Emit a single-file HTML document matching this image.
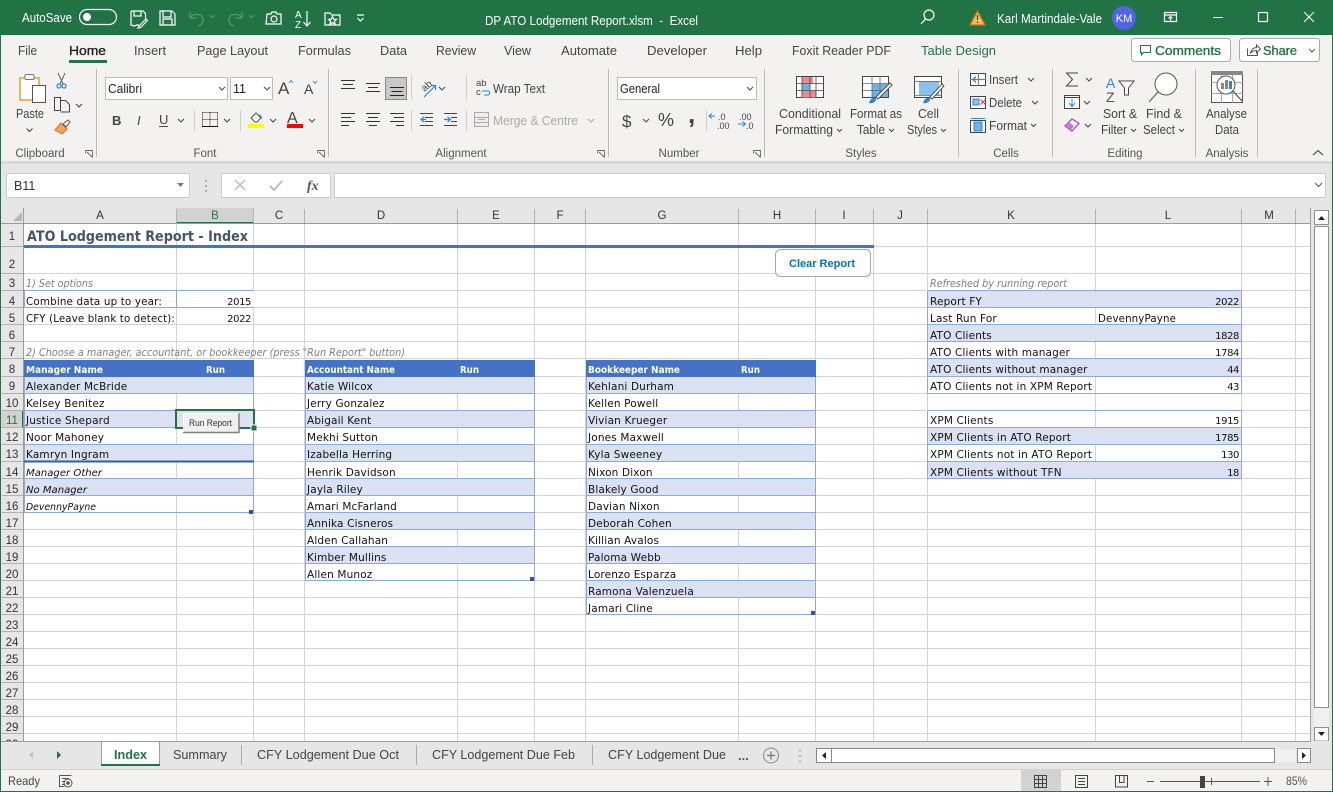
<!DOCTYPE html>
<html><head><meta charset="utf-8"><title>DP ATO Lodgement Report.xlsm - Excel</title>
<style>
html,body{margin:0;padding:0;background:#e6e6e6;width:1333px;height:792px;overflow:hidden}
svg{display:block}
text{font-family:"Liberation Sans",sans-serif;white-space:pre}
.t{font-size:13px;fill:#fff}
.tab{font-size:13px;fill:#444}
.rb{font-size:12.5px;fill:#444}
.g{font-size:11.5px;fill:#555;text-anchor:middle}
.c{font-family:"DejaVu Sans",sans-serif;font-size:10.5px;letter-spacing:.15px;fill:#111}
.ci{font-family:"DejaVu Sans",sans-serif;font-size:10px;fill:#111;font-style:italic}
.n{font-family:"DejaVu Sans",sans-serif;font-size:10px;letter-spacing:-.4px;fill:#111;text-anchor:end}
.h{font-family:"DejaVu Sans",sans-serif;font-size:10px;fill:#fff;font-weight:bold}
.note{font-family:"DejaVu Sans",sans-serif;font-size:10.5px;fill:#7f7f7f;font-style:italic}
.rn{font-size:11.5px;fill:#333;text-anchor:middle}
.ch{font-size:11.5px;fill:#333;text-anchor:middle}
.st{font-size:12.5px;fill:#444}
.i{fill:none;stroke:#444;stroke-width:1}
.w{fill:none;stroke:#fff;stroke-width:1.2}
</style></head><body>
<svg width="1333" height="792" viewBox="0 0 1333 792" xmlns="http://www.w3.org/2000/svg">
<rect width="1333" height="792" fill="#e6e6e6"/>
<!-- title bar -->
<rect width="1333" height="35" fill="#217346"/>
<text class="t" x="22" y="22" textLength="50" lengthAdjust="spacingAndGlyphs">AutoSave</text>
<rect x="79.500" y="9.500" width="37" height="15" rx="7.500" class="w"/><circle cx="87" cy="17" r="4" fill="#fff"/>
<path class="w" d="M131 11h12l2.500 2.500v5M131 11v14l3 1 3-1 2 0M134 11v5h7v-5"/><path d="M139 26l7-7 1.500 1.500-7 7-2.500.5z" class="w"/>
<path class="w" d="M160 11h12l3 3v11h-15zM163 11v6h8v-6M163 25v-6h9v6"/>
<path d="M190 12v6h6M190 18c3-5 12-5 13 1 .5 4-2 6-5 7" fill="none" stroke="#5c9378" stroke-width="1.300"/>
<path d="M210 15l2.500 2.500 2.500-2.500" fill="none" stroke="#5c9378"/>
<path d="M242 12v6h-6M242 18c-3-5-12-5-13 1-.5 4 2 6 5 7" fill="none" stroke="#5c9378" stroke-width="1.300"/>
<path d="M249 15l2.500 2.500 2.500-2.500" fill="none" stroke="#5c9378"/>
<path class="w" d="M267 14h4l1-2h4l1 2h4v10h-15z"/><circle cx="274" cy="19" r="3" class="w"/>
<text x="295" y="18" style="font-size:10px;fill:#fff">A</text><text x="295" y="28" style="font-size:10px;fill:#fff">Z</text>
<path class="w" d="M307 11v15M303.500 22l3.500 4 3.500-4"/>
<path class="w" d="M325 13h5l2 2h8v10h-15z"/><path d="M332.500 16.500l1.200 2.700 2.800.2-2.100 1.900.7 2.800-2.600-1.500-2.600 1.500.7-2.800-2.100-1.900 2.800-.2z" class="w" stroke-width="1"/>
<path class="w" d="M357 15h7M357.500 18l3 3 3-3"/>
<text class="t" x="485" y="25" textLength="213" lengthAdjust="spacingAndGlyphs">DP ATO Lodgement Report.xlsm  -  Excel</text>
<circle cx="929" cy="15" r="5" class="w"/><path class="w" d="M925.500 19l-4.500 5"/>
<path d="M977.500 11l7.500 14h-15z" fill="#f2c14e" stroke="#d9691e" stroke-width="1.300"/><path d="M977.500 15v5M977.500 21.500v1.500" stroke="#444" stroke-width="1.200"/>
<text class="t" x="997" y="23" textLength="105" lengthAdjust="spacingAndGlyphs">Karl Martindale-Vale</text>
<circle cx="1124" cy="18" r="12" fill="#4f65e6"/><text x="1124" y="22" style="font-size:11px;fill:#fff;text-anchor:middle">KM</text>
<path class="w" d="M1164.500 12.500h12v9h-12zM1164.500 15h12M1170.500 21v-4M1168.500 18.500l2-2 2 2"/>
<path d="M1213 17.500h10" stroke="#fff" stroke-width="1"/>
<rect x="1258.500" y="12.500" width="9" height="9" class="w" stroke-width="1"/>
<path d="M1304 12l10 10M1314 12l-10 10" stroke="#fff" stroke-width="1.100"/>
<!-- ribbon -->
<rect x="1" y="35" width="1331" height="126" fill="#f3f2f1"/>
<rect x="1" y="161" width="1331" height="3" fill="#d8d8d8"/>
<text class="tab" x="18" y="55" textLength="19" lengthAdjust="spacingAndGlyphs">File</text>
<text class="tab" x="69" y="55" textLength="37" lengthAdjust="spacingAndGlyphs" style="fill:#222;stroke:#222;stroke-width:.35">Home</text>
<rect x="69" y="60" width="38" height="3" fill="#217346"/>
<text class="tab" x="134" y="55" textLength="32" lengthAdjust="spacingAndGlyphs">Insert</text>
<text class="tab" x="197" y="55" textLength="71" lengthAdjust="spacingAndGlyphs">Page Layout</text>
<text class="tab" x="298" y="55" textLength="53" lengthAdjust="spacingAndGlyphs">Formulas</text>
<text class="tab" x="380" y="55" textLength="27" lengthAdjust="spacingAndGlyphs">Data</text>
<text class="tab" x="436" y="55" textLength="40" lengthAdjust="spacingAndGlyphs">Review</text>
<text class="tab" x="504" y="55" textLength="27" lengthAdjust="spacingAndGlyphs">View</text>
<text class="tab" x="561" y="55" textLength="56" lengthAdjust="spacingAndGlyphs">Automate</text>
<text class="tab" x="647" y="55" textLength="60" lengthAdjust="spacingAndGlyphs">Developer</text>
<text class="tab" x="735" y="55" textLength="27" lengthAdjust="spacingAndGlyphs">Help</text>
<text class="tab" x="792" y="55" textLength="99" lengthAdjust="spacingAndGlyphs">Foxit Reader PDF</text>
<text class="tab" x="921" y="55" textLength="75" lengthAdjust="spacingAndGlyphs" style="fill:#217346">Table Design</text>
<rect x="1131.500" y="38.500" width="99" height="23" rx="3" fill="#fff" stroke="#aaa"/>
<path d="M1140.500 45.500h10v7h-7l-2 2.500v-2.500h-1z" fill="none" stroke="#217346"/>
<text x="1155" y="55" textLength="66" lengthAdjust="spacingAndGlyphs" style="font-size:13px;fill:#217346;stroke:#217346;stroke-width:.35">Comments</text>
<rect x="1239.500" y="38.500" width="80" height="23" rx="3" fill="#fff" stroke="#aaa"/>
<path d="M1247.500 48.500v7h10v-3M1250.500 53c1-4 3-5.500 6-5.500v-2.500l4 4-4 4v-2.500c-2 0-4 .5-6 2.500z" fill="none" stroke="#555"/>
<text x="1263" y="55" textLength="34" lengthAdjust="spacingAndGlyphs" style="font-size:13px;fill:#217346;stroke:#217346;stroke-width:.35">Share</text>
<path d="M1309 49l3 3 3-3" fill="none" stroke="#217346"/>
<!-- group separators -->
<path d="M96.500 69v88M328.500 69v88M608.500 69v88M764.500 69v88M958.500 69v88M1052.500 69v88M1195.500 69v88M1257.500 69v88" stroke="#bbb"/>
<text class="g" x="40" y="157">Clipboard</text><text class="g" x="205" y="157">Font</text><text class="g" x="461" y="157">Alignment</text><text class="g" x="679" y="157">Number</text><text class="g" x="861" y="157">Styles</text><text class="g" x="1006" y="157">Cells</text><text class="g" x="1125" y="157">Editing</text><text class="g" x="1227" y="157">Analysis</text>
<path d="M85.500 150.500h7v7M85.500 150.500v3M87 152l5 5M317.500 150.500h7v7M317.500 150.500v3M319 152l5 5M597.500 150.500h7v7M597.500 150.500v3M599 152l5 5M753.500 150.500h7v7M753.500 150.500v3M755 152l5 5" fill="none" stroke="#666" stroke-width=".9"/>
<path d="M1313 155l5-4.500 5 4.500" fill="none" stroke="#555" stroke-width="1.200"/>
<!-- clipboard -->
<path d="M20 78h19v22H20z" fill="#fff" stroke="#e59c3c" stroke-width="1.500"/><rect x="25" y="74.500" width="9" height="5" rx="1" fill="#fff" stroke="#777"/>
<rect x="32.500" y="85.500" width="13" height="17" fill="#fff" stroke="#555"/>
<text class="rb" x="16" y="118" textLength="28" lengthAdjust="spacingAndGlyphs">Paste</text>
<path d="M26.500 128.500l3 3 3-3" fill="none" stroke="#444"/>
<path d="M58 73l5 11M65 73l-5 11" stroke="#666"/><circle cx="59" cy="86" r="2" fill="none" stroke="#2b88d8" stroke-width="1.200"/><circle cx="64" cy="86" r="2" fill="none" stroke="#2b88d8" stroke-width="1.200"/>
<path class="i" d="M54.500 97.500h6v13h-6zM60.500 100.500h5l4 4v7.500h-9"/><path class="i" d="M76 104l3 3 3-3"/>
<path d="M55 130l6-7 6 6-5 5z" fill="#f0a65f" stroke="#d9691e"/><path d="M63 124l5-4 2 2-4 5z" fill="none" stroke="#555"/>
<!-- font -->
<rect x="105.500" y="77.500" width="122" height="22" fill="#fff" stroke="#bbb"/>
<text class="rb" x="108" y="93" textLength="34" lengthAdjust="spacingAndGlyphs" style="fill:#222">Calibri</text><path class="i" d="M219 87l3 3 3-3"/>
<rect x="230.500" y="77.500" width="42" height="22" fill="#fff" stroke="#bbb"/>
<text class="rb" x="233" y="93" style="fill:#222">11</text><path class="i" d="M264 87l3 3 3-3"/>
<text x="278" y="94" style="font-size:17px;fill:#444">A</text><path d="M289 83l2-2.500 2 2.500" fill="none" stroke="#2b88d8"/>
<text x="304" y="94" style="font-size:14px;fill:#444">A</text><path d="M313 81l2 2.500 2-2.500" fill="none" stroke="#2b88d8"/>
<text x="112" y="125" style="font-size:13px;font-weight:bold;fill:#444">B</text>
<text x="137" y="125" style="font-size:13px;font-style:italic;fill:#444">I</text>
<text x="159" y="124" style="font-size:13px;fill:#444">U</text><path d="M159 126.500h9" stroke="#444"/><path class="i" d="M178 119l3 3 3-3"/>
<path d="M202.500 112.500h15M202.500 112.500v13.500M217.500 112.500v13.500M210 112.500v13.500M202.500 119.500h15" fill="none" stroke="#222" stroke-dasharray="1 1"/><path d="M202 126.500h16" stroke="#111"/><path class="i" d="M224 119l3 3 3-3"/>
<path d="M251 118l5-5 5 5-4 4h-2z" fill="none" stroke="#555"/><path d="M259 115l2 1 .5 3" stroke="#2b88d8" fill="none"/><rect x="248" y="124" width="16" height="4" fill="#ff0"/><path class="i" d="M270 119l3 3 3-3"/>
<text x="287" y="123" style="font-size:16px;fill:#444">A</text><rect x="287" y="124" width="16" height="4" fill="#f00"/><path class="i" d="M309 119l3 3 3-3"/>
<path d="M194.500 110v21M240.500 110v21" stroke="#ccc"/>
<!-- alignment -->
<path d="M341 80.500h14M343 84.500h10M341 88.500h14M366 83.500h14M368 87.500h10M366 91.500h14" stroke="#333"/>
<rect x="385.500" y="77.500" width="21" height="22" fill="#c8c8c8" stroke="#888"/><path d="M390 87.500h14M391.500 91.500h11M390 95.500h14" stroke="#222"/>
<path d="M341 113.500h14M341 117.500h10M341 121.500h14M341 125.500h8M366 113.500h14M368 117.500h10M366 121.500h14M369 125.500h8M390 113.500h14M394 117.500h10M390 121.500h14M396 125.500h8" stroke="#333"/>
<path d="M411.500 75v25M411.500 110v21" stroke="#ccc"/>
<text x="420" y="90" transform="rotate(-42 425 85)" style="font-size:10px;fill:#444">ab</text><path d="M424 97l11-11M431 85.500h4.500v4.500" stroke="#2b88d8" fill="none" stroke-width="1.200"/><path class="i" d="M439 87l3 3 3-3"/>
<path d="M425 117.500h8M425 121.500h8M420 113.500h13M420 125.500h13" fill="none" stroke="#444"/><path d="M424 117l-3 2.500 3 2.500M421 119.500h5" fill="none" stroke="#2b88d8" stroke-width="1.200"/>
<path d="M444 113.500h13M451 117.500h6M451 121.500h6M444 125.500h13" stroke="#444"/><path d="M444 119.500h6M447.500 117l3 2.500-3 2.500" fill="none" stroke="#2b88d8" stroke-width="1.200"/>
<path d="M466.500 75v25M466.500 110v21" stroke="#ccc"/>
<text x="476" y="86" style="font-size:9.500px;fill:#444">ab</text><text x="476" y="95" style="font-size:9.500px;fill:#444">c</text><path d="M482 91h6c2 0 2 4 0 4h-4" fill="none" stroke="#2b88d8"/>
<text class="rb" x="493" y="93" textLength="52" lengthAdjust="spacingAndGlyphs">Wrap Text</text>
<rect x="474.500" y="112.500" width="14" height="14" fill="#eee" stroke="#aaa"/><path d="M474.500 117.500h14M474.500 122.500h14M478 119.500h7" stroke="#aaa"/>
<text class="rb" x="493" y="125" textLength="85" lengthAdjust="spacingAndGlyphs" style="fill:#aaa">Merge &amp; Centre</text>
<path d="M588 119l3 3 3-3" fill="none" stroke="#aaa"/>
<!-- number -->
<rect x="617.500" y="77.500" width="139" height="22" fill="#fff" stroke="#bbb"/>
<text class="rb" x="620" y="93" textLength="40" lengthAdjust="spacingAndGlyphs" style="fill:#222">General</text><path class="i" d="M747 87l3 3 3-3"/>
<text x="622" y="127" style="font-size:17px;fill:#444">$</text><path class="i" d="M643 119l3 3 3-3"/>
<text x="658" y="126" style="font-size:18px;fill:#444">%</text>
<text x="688" y="123" style="font-size:26px;font-weight:bold;fill:#444">,</text>
<path d="M706.500 110v21" stroke="#ccc"/>
<text x="718" y="120" style="font-size:9px;fill:#444">.0</text><text x="717" y="129" style="font-size:9px;fill:#444">.00</text><path d="M715 116h-6M712 113.500l-3 2.500 3 2.500" fill="none" stroke="#2b88d8"/>
<text x="739" y="120" style="font-size:9px;fill:#444">.00</text><text x="746" y="129" style="font-size:9px;fill:#444">.0</text><path d="M738 124h7M742.500 121.500l3 2.500-3 2.500" fill="none" stroke="#2b88d8"/>
<!-- styles -->
<rect x="796.500" y="76.500" width="27" height="21" fill="#fff" stroke="#444"/><rect x="802" y="77" width="11" height="6.500" fill="#f4888e"/><rect x="802" y="84" width="8" height="6.500" fill="#6db1e8"/><rect x="802" y="91" width="14" height="6.500" fill="#f4888e"/><path d="M796 83.500h28M796 90.500h28M802 76v22M810 76v22M816 76v22" stroke="#444" stroke-width=".8"/>
<text class="rb" x="779" y="118" textLength="62" lengthAdjust="spacingAndGlyphs">Conditional</text>
<text class="rb" x="775" y="134" textLength="58" lengthAdjust="spacingAndGlyphs">Formatting</text><path class="i" d="M837 129l2.500 2.500 2.500-2.500"/>
<rect x="862.500" y="76.500" width="26" height="21" fill="#fff" stroke="#444"/><rect x="872" y="84" width="16" height="13" fill="#6db1e8"/><path d="M862 83.500h26M862 90.500h26M872 76v22M880 76v22" stroke="#666" stroke-width=".8"/><path d="M876 97l14-14 2 2-14 14z" fill="#fff" stroke="#555"/><path d="M869 103c1-4 4-6 7-5 1 3-3 6-7 5z" fill="#2b88d8"/>
<text class="rb" x="850" y="118" textLength="52" lengthAdjust="spacingAndGlyphs">Format as</text>
<text class="rb" x="857" y="134" textLength="28" lengthAdjust="spacingAndGlyphs">Table</text><path class="i" d="M889 129l2.500 2.500 2.500-2.500"/>
<rect x="914.500" y="76.500" width="27" height="21" fill="#fff" stroke="#444"/><rect x="919" y="81" width="20" height="14" fill="#89c1ee"/><path d="M914 81.500h28M914 95.500h28" stroke="#666" stroke-width=".8"/><path d="M930 97l12-13 2 2-12 13z" fill="#fff" stroke="#555"/><path d="M923 103c1-4 4-6 7-5 1 3-3 6-7 5z" fill="#2b88d8"/>
<text class="rb" x="918" y="118" textLength="21" lengthAdjust="spacingAndGlyphs">Cell</text>
<text class="rb" x="907" y="134" textLength="30" lengthAdjust="spacingAndGlyphs">Styles</text><path class="i" d="M941 129l2.500 2.500 2.500-2.500"/>
<!-- cells -->
<rect x="970.500" y="73.500" width="15" height="12" fill="#fff" stroke="#444"/><path d="M978.500 73v13M970 79.500h16" stroke="#777"/><path d="M983 79.500h-10M976 76.500l-3 3 3 3" fill="none" stroke="#2b88d8" stroke-width="1.300"/>
<text class="rb" x="989" y="84" textLength="29" lengthAdjust="spacingAndGlyphs">Insert</text><path class="i" d="M1028 78l3 3 3-3"/>
<rect x="970.500" y="96.500" width="15" height="12" fill="#fff" stroke="#444"/><rect x="973" y="99" width="6" height="6" fill="#89c1ee" stroke="#2b88d8"/><path d="M980.500 99.500l5 5M985.500 99.500l-5 5" stroke="#e33" stroke-width="1.200"/>
<text class="rb" x="989" y="107" textLength="33" lengthAdjust="spacingAndGlyphs">Delete</text><path class="i" d="M1032 101l3 3 3-3"/>
<rect x="970.500" y="120.500" width="15" height="12" fill="#fff" stroke="#444"/><rect x="974" y="122" width="8" height="9" fill="#6db1e8" stroke="#2b88d8"/><path d="M971 118.500h14" stroke="#2b88d8"/>
<text class="rb" x="989" y="130" textLength="38" lengthAdjust="spacingAndGlyphs">Format</text><path class="i" d="M1031 124l2.500 2.500 2.500-2.500"/>
<!-- editing -->
<path d="M1078 73h-11.500l6 6.500-6 6.500h11.500" class="i"/><path class="i" d="M1086 78l3 3 3-3"/>
<rect x="1064.500" y="95.500" width="15" height="13" fill="#fff" stroke="#444"/><path d="M1064 97.500h16" stroke="#444"/><path d="M1072 99v7M1069 103l3 3.500 3-3.500" fill="none" stroke="#2b88d8"/><path class="i" d="M1084 101l3 3 3-3"/>
<path d="M1065 126l7-7 7 4.500-7 7.500z" fill="#fff" stroke="#a64dba" stroke-width="1.300"/><path d="M1065 126l4-4 5 4-3 4z" fill="#c878d8"/><path class="i" d="M1085 124l3 3 3-3"/>
<text x="1106" y="88" style="font-size:14px;fill:#2b88d8">A</text><text x="1106" y="102" style="font-size:14px;fill:#555">Z</text>
<path d="M1119 81h15l-5.500 7v7l-4 0v-7z" fill="#fff" stroke="#444"/>
<text class="rb" x="1103" y="118" textLength="34" lengthAdjust="spacingAndGlyphs">Sort &amp;</text>
<text class="rb" x="1101" y="134" textLength="26" lengthAdjust="spacingAndGlyphs">Filter</text><path class="i" d="M1131 129l2.500 2.500 2.500-2.500"/>
<circle cx="1166" cy="84" r="11" fill="#fff" stroke="#555"/><path d="M1158 92l-9 10" stroke="#555"/>
<text class="rb" x="1146" y="118" textLength="36" lengthAdjust="spacingAndGlyphs">Find &amp;</text>
<text class="rb" x="1143" y="134" textLength="32" lengthAdjust="spacingAndGlyphs">Select</text><path class="i" d="M1179 129l2.500 2.500 2.500-2.500"/>
<!-- analysis -->
<rect x="1211.500" y="71.500" width="31" height="31" fill="#fff" stroke="#555"/><rect x="1211" y="71" width="32" height="4" fill="#888"/><path d="M1211 82.500h32M1211 93.500h32M1221.500 75v28M1232.500 75v28" stroke="#aaa"/>
<circle cx="1226" cy="85" r="9" fill="#fff" stroke="#555"/><rect x="1221" y="83" width="3" height="6" fill="#888"/><rect x="1225" y="80" width="3" height="9" fill="#888"/><rect x="1229" y="81" width="3" height="8" fill="#2b88d8"/><path d="M1233 91l9 10" stroke="#555" stroke-width="1.300"/>
<text class="rb" x="1206" y="118" textLength="41" lengthAdjust="spacingAndGlyphs">Analyse</text>
<text class="rb" x="1215" y="134" textLength="24" lengthAdjust="spacingAndGlyphs">Data</text>
<!-- formula bar -->
<rect x="6.500" y="173.500" width="183" height="24" fill="#fff" stroke="#ccc"/>
<text x="14" y="190" style="font-size:12.500px;fill:#333">B11</text><path d="M177 183h7l-3.500 4z" fill="#777"/>
<path d="M206 180v2M206 185v2M206 190v2" stroke="#999" stroke-width="1.500"/>
<rect x="221.500" y="173.500" width="109" height="24" fill="#fff" stroke="#ccc"/>
<path d="M235 180l10 10M245 180l-10 10" stroke="#bbb" stroke-width="1.500"/><path d="M270 186l4 4 8-9" fill="none" stroke="#bbb" stroke-width="2"/>
<text x="307" y="190" style="font-family:'Liberation Serif',serif;font-size:14px;font-style:italic;font-weight:bold;fill:#555">fx</text>
<rect x="334.500" y="173.500" width="991" height="24" fill="#fff" stroke="#ccc"/>
<path d="M1315 183l3.500 3.500 3.500-3.500" fill="none" stroke="#555"/>
<!-- sheet -->
<rect x="24" y="224" width="1286" height="517" fill="#fff"/>
<rect x="1" y="208" width="1309" height="16" fill="#e6e6e6"/>
<rect x="1" y="224" width="23" height="517" fill="#e6e6e6"/>
<path d="M13 221h9v-9z" fill="#b5b5b5"/>
<rect x="177" y="208" width="77" height="15" fill="#d2d2d2"/><rect x="176" y="222" width="78" height="2" fill="#217346"/>
<rect x="1" y="411" width="22" height="17" fill="#d2d2d2"/><rect x="22" y="411" width="2" height="17" fill="#217346"/>
<path d="M24 273.500h1286M24 290.500h1286M24 307.500h1286M24 324.500h1286M24 341.500h1286M24 358.500h1286M24 376.500h1286M24 393.500h1286M24 410.500h1286M24 427.500h1286M24 444.500h1286M24 461.500h1286M24 478.500h1286M24 495.500h1286M24 512.500h1286M24 529.500h1286M24 546.500h1286M24 563.500h1286M24 580.500h1286M24 597.500h1286M24 614.500h1286M24 631.500h1286M24 648.500h1286M24 665.500h1286M24 682.500h1286M24 699.500h1286M24 716.500h1286M24 733.500h1286M874 246.500h436M176.500 224v517M253.500 224v517M304.500 224v517M457.500 224v517M534.500 224v517M585.500 224v517M738.500 224v517M815.500 224v517M873.500 224v517M927.500 224v517M1095.500 224v517M1241.500 224v517M1295.500 224v517" stroke="#d4d4d4"/>
<path d="M1.500 246.500h22M1.500 273.500h22M1.500 290.500h22M1.500 307.500h22M1.500 324.500h22M1.500 341.500h22M1.500 358.500h22M1.500 376.500h22M1.500 393.500h22M1.500 410.500h22M1.500 427.500h22M1.500 444.500h22M1.500 461.500h22M1.500 478.500h22M1.500 495.500h22M1.500 512.500h22M1.500 529.500h22M1.500 546.500h22M1.500 563.500h22M1.500 580.500h22M1.500 597.500h22M1.500 614.500h22M1.500 631.500h22M1.500 648.500h22M1.500 665.500h22M1.500 682.500h22M1.500 699.500h22M1.500 716.500h22M1.500 733.500h22M176.500 209v14M253.500 209v14M304.500 209v14M457.500 209v14M534.500 209v14M585.500 209v14M738.500 209v14M815.500 209v14M873.500 209v14M927.500 209v14M1095.500 209v14M1241.500 209v14M1295.500 209v14" stroke="#b1b1b1"/>
<path d="M23.500 208v533M1 223.500h1309M1310.500 208v533" stroke="#9c9c9c"/>
<!-- column headers -->
<text class="ch" x="100" y="219">A</text><text class="ch" x="215" y="219" style="fill:#217346">B</text><text class="ch" x="279" y="219">C</text><text class="ch" x="381" y="219">D</text><text class="ch" x="496" y="219">E</text><text class="ch" x="560" y="219">F</text><text class="ch" x="662" y="219">G</text><text class="ch" x="777" y="219">H</text><text class="ch" x="844" y="219">I</text><text class="ch" x="900" y="219">J</text><text class="ch" x="1011" y="219">K</text><text class="ch" x="1168" y="219">L</text><text class="ch" x="1269" y="219">M</text>
<!-- row numbers -->
<text class="rn" x="12" y="240">1</text><text class="rn" x="12" y="268">2</text><text class="rn" x="12" y="287">3</text><text class="rn" x="12" y="305">4</text><text class="rn" x="12" y="322">5</text><text class="rn" x="12" y="339">6</text><text class="rn" x="12" y="356">7</text><text class="rn" x="12" y="373">8</text><text class="rn" x="12" y="390">9</text><text class="rn" x="12" y="407">10</text><text class="rn" x="12" y="424" style="fill:#217346">11</text><text class="rn" x="12" y="441">12</text><text class="rn" x="12" y="458">13</text><text class="rn" x="12" y="476">14</text><text class="rn" x="12" y="493">15</text><text class="rn" x="12" y="510">16</text><text class="rn" x="12" y="527">17</text><text class="rn" x="12" y="544">18</text><text class="rn" x="12" y="561">19</text><text class="rn" x="12" y="578">20</text><text class="rn" x="12" y="595">21</text><text class="rn" x="12" y="612">22</text><text class="rn" x="12" y="629">23</text><text class="rn" x="12" y="646">24</text><text class="rn" x="12" y="663">25</text><text class="rn" x="12" y="680">26</text><text class="rn" x="12" y="697">27</text><text class="rn" x="12" y="714">28</text><text class="rn" x="12" y="731">29</text><text class="rn" x="12" y="748">30</text>
<!-- title -->
<rect x="24" y="245" width="850" height="3" fill="#4472c4"/>
<text x="27" y="241" style="font-family:'DejaVu Sans',sans-serif;font-size:14px;font-weight:bold;fill:#44546a" textLength="221" lengthAdjust="spacingAndGlyphs">ATO Lodgement Report - Index</text>
<text class="note" x="26" y="287" textLength="67" lengthAdjust="spacingAndGlyphs">1) Set options</text>
<rect x="24" y="291" width="230" height="17" fill="#fff"/>
<path d="M24 290.500h230M24 307.500h230M176.500 291v17M24.500 291v17" stroke="#8ea9db"/>
<text class="c" x="26" y="305" textLength="136" lengthAdjust="spacingAndGlyphs">Combine data up to year:</text><text class="n" x="251" y="305">2015</text>
<text class="c" x="26" y="322" textLength="149" lengthAdjust="spacingAndGlyphs">CFY (Leave blank to detect):</text><text class="n" x="251" y="322">2022</text>
<text class="note" x="26" y="356" textLength="379" lengthAdjust="spacingAndGlyphs">2) Choose a manager, accountant, or bookkeeper (press "Run Report" button)</text>
<!-- tables fill -->
<rect x="24" y="360" width="230" height="17" fill="#4472c4"/><rect x="305" y="360" width="230" height="17" fill="#4472c4"/><rect x="586" y="360" width="230" height="17" fill="#4472c4"/>
<g fill="#d9e1f2">
<rect x="24" y="377" width="230" height="17"/><rect x="24" y="411" width="230" height="17"/><rect x="24" y="445" width="230" height="17"/><rect x="24" y="479" width="230" height="17"/>
<rect x="305" y="377" width="230" height="17"/><rect x="305" y="411" width="230" height="17"/><rect x="305" y="445" width="230" height="17"/><rect x="305" y="479" width="230" height="17"/><rect x="305" y="513" width="230" height="17"/><rect x="305" y="547" width="230" height="17"/>
<rect x="586" y="377" width="230" height="17"/><rect x="586" y="411" width="230" height="17"/><rect x="586" y="445" width="230" height="17"/><rect x="586" y="479" width="230" height="17"/><rect x="586" y="513" width="230" height="17"/><rect x="586" y="547" width="230" height="17"/><rect x="586" y="581" width="230" height="17"/>
<rect x="928" y="291" width="314" height="17"/><rect x="928" y="325" width="314" height="17"/><rect x="928" y="359" width="314" height="17"/><rect x="928" y="428" width="314" height="17"/><rect x="928" y="462" width="314" height="17"/>
</g>
<path d="M24 393.500h230M24 410.500h230M24 427.500h230M24 444.500h230M24 478.500h230M24 495.500h230M24 512.500h230M24.500 377v136M253.500 377v136M305 393.500h230M305 410.500h230M305 427.500h230M305 444.500h230M305 461.500h230M305 478.500h230M305 495.500h230M305 512.500h230M305 529.500h230M305 546.500h230M305 563.500h230M305 580.500h230M305.500 377v204M534.500 377v204M586 393.500h230M586 410.500h230M586 427.500h230M586 444.500h230M586 461.500h230M586 478.500h230M586 495.500h230M586 512.500h230M586 529.500h230M586 546.500h230M586 563.500h230M586 580.500h230M586 597.500h230M586 614.500h230M586.500 377v238M815.500 377v238M928 290.500h314M928 307.500h314M928 324.500h314M928 341.500h314M928 358.500h314M928 376.500h314M928 393.500h314M928 410.500h314M928 427.500h314M928 444.500h314M928 461.500h314M928 478.500h314M927.500 291v103M1241.500 291v103M927.500 411v68M1241.500 411v68" stroke="#8ea9db"/>
<rect x="24" y="460.500" width="230" height="2" fill="#2f5f9e"/>
<path d="M249 514v-4h4v4zM530 581v-4h4v4zM811 615v-4h4v4z" fill="#3a50a8"/>
<!-- table text -->
<text class="h" x="26" y="373" textLength="77" lengthAdjust="spacingAndGlyphs">Manager Name</text><text class="h" x="206" y="373" textLength="19" lengthAdjust="spacingAndGlyphs">Run</text>
<text class="c" x="26" y="390">Alexander McBride</text><text class="c" x="26" y="407">Kelsey Benitez</text><text class="c" x="26" y="424">Justice Shepard</text><text class="c" x="26" y="441">Noor Mahoney</text><text class="c" x="26" y="458">Kamryn Ingram</text>
<text class="ci" x="26" y="476" textLength="76" lengthAdjust="spacingAndGlyphs">Manager Other</text><text class="ci" x="26" y="493" textLength="61" lengthAdjust="spacingAndGlyphs">No Manager</text><text class="ci" x="26" y="510" textLength="70" lengthAdjust="spacingAndGlyphs">DevennyPayne</text>
<text class="h" x="307" y="373" textLength="88" lengthAdjust="spacingAndGlyphs">Accountant Name</text><text class="h" x="460" y="373" textLength="19" lengthAdjust="spacingAndGlyphs">Run</text>
<text class="c" x="307" y="390">Katie Wilcox</text><text class="c" x="307" y="407">Jerry Gonzalez</text><text class="c" x="307" y="424">Abigail Kent</text><text class="c" x="307" y="441">Mekhi Sutton</text><text class="c" x="307" y="458">Izabella Herring</text><text class="c" x="307" y="476">Henrik Davidson</text><text class="c" x="307" y="493">Jayla Riley</text><text class="c" x="307" y="510">Amari McFarland</text><text class="c" x="307" y="527">Annika Cisneros</text><text class="c" x="307" y="544">Alden Callahan</text><text class="c" x="307" y="561">Kimber Mullins</text><text class="c" x="307" y="578">Allen Munoz</text>
<text class="h" x="588" y="373" textLength="92" lengthAdjust="spacingAndGlyphs">Bookkeeper Name</text><text class="h" x="741" y="373" textLength="19" lengthAdjust="spacingAndGlyphs">Run</text>
<text class="c" x="588" y="390">Kehlani Durham</text><text class="c" x="588" y="407">Kellen Powell</text><text class="c" x="588" y="424">Vivian Krueger</text><text class="c" x="588" y="441">Jones Maxwell</text><text class="c" x="588" y="458">Kyla Sweeney</text><text class="c" x="588" y="476">Nixon Dixon</text><text class="c" x="588" y="493">Blakely Good</text><text class="c" x="588" y="510">Davian Nixon</text><text class="c" x="588" y="527">Deborah Cohen</text><text class="c" x="588" y="544">Killian Avalos</text><text class="c" x="588" y="561">Paloma Webb</text><text class="c" x="588" y="578">Lorenzo Esparza</text><text class="c" x="588" y="595">Ramona Valenzuela</text><text class="c" x="588" y="612">Jamari Cline</text>
<!-- right table -->
<text class="note" x="930" y="287" textLength="137" lengthAdjust="spacingAndGlyphs">Refreshed by running report</text>
<text class="c" x="930" y="305">Report FY</text><text class="n" x="1239" y="305">2022</text>
<text class="c" x="930" y="322">Last Run For</text><text class="c" x="1098" y="322" textLength="78" lengthAdjust="spacingAndGlyphs">DevennyPayne</text>
<text class="c" x="930" y="339">ATO Clients</text><text class="n" x="1239" y="339">1828</text>
<text class="c" x="930" y="356">ATO Clients with manager</text><text class="n" x="1239" y="356">1784</text>
<text class="c" x="930" y="373">ATO Clients without manager</text><text class="n" x="1239" y="373">44</text>
<text class="c" x="930" y="390">ATO Clients not in XPM Report</text><text class="n" x="1239" y="390">43</text>
<text class="c" x="930" y="424">XPM Clients</text><text class="n" x="1239" y="424">1915</text>
<text class="c" x="930" y="441">XPM Clients in ATO Report</text><text class="n" x="1239" y="441">1785</text>
<text class="c" x="930" y="458">XPM Clients not in ATO Report</text><text class="n" x="1239" y="458">130</text>
<text class="c" x="930" y="476">XPM Clients without TFN</text><text class="n" x="1239" y="476">18</text>
<!-- clear button -->
<rect x="775.500" y="249.500" width="95" height="27" rx="5" fill="#fff" fill-opacity=".9" stroke="#a6a6a6"/>
<text x="789" y="267" textLength="66" lengthAdjust="spacingAndGlyphs" style="font-size:11px;font-weight:bold;fill:#0070c0">Clear Report</text>
<!-- selection and run button -->
<rect x="176" y="410" width="78" height="18" fill="none" stroke="#217346" stroke-width="2"/>
<rect x="251" y="425" width="6" height="6" fill="#217346" stroke="#fff"/>
<rect x="183" y="413" width="56" height="20" fill="#f0f0f0"/>
<path d="M183 432.500h56v-19.500" fill="none" stroke="#808080" stroke-width="1.500"/><path d="M183.500 432v-18.500h55" fill="none" stroke="#fff"/>
<text x="189" y="426" textLength="43" lengthAdjust="spacingAndGlyphs" style="font-size:9px;fill:#333">Run Report</text>
<!-- v scrollbar -->
<rect x="1311" y="208" width="21" height="533" fill="#e6e6e6"/>
<rect x="1314.500" y="210.500" width="14" height="14" fill="#fff" stroke="#8f8f8f"/><path d="M1318 220h7l-3.500-4z" fill="#222"/>
<rect x="1314.500" y="226.500" width="14" height="481" fill="#fff" stroke="#8f8f8f"/>
<rect x="1314" y="708" width="15" height="19" fill="#f0f0f0"/>
<rect x="1314.500" y="727.500" width="14" height="13.500" fill="#fff" stroke="#8f8f8f"/><path d="M1318 732h7l-3.500 4z" fill="#222"/>
<!-- sheet tabs -->
<rect x="1" y="741" width="1331" height="28" fill="#e6e6e6"/>
<path d="M1 741.500h1310" stroke="#9c9c9c"/>
<path d="M33 751v8l-4-4z" fill="#c4c4c4"/><path d="M57 751v8l4-4z" fill="#217346"/>
<path d="M101.500 765v-24M159.500 741v24" stroke="#9c9c9c"/>
<rect x="102" y="742" width="57" height="22" fill="#fff"/><rect x="101" y="764" width="59" height="2" fill="#217346"/>
<text x="114" y="759" textLength="33" lengthAdjust="spacingAndGlyphs" style="font-size:13px;font-weight:bold;fill:#217346">Index</text>
<text class="st" x="173" y="759" textLength="54" lengthAdjust="spacingAndGlyphs">Summary</text>
<path d="M241.500 745v20M416.500 745v20M592.500 745v20" stroke="#aaa"/>
<text class="st" x="257" y="759" textLength="142" lengthAdjust="spacingAndGlyphs">CFY Lodgement Due Oct</text>
<text class="st" x="432" y="759" textLength="143" lengthAdjust="spacingAndGlyphs">CFY Lodgement Due Feb</text>
<text class="st" x="608" y="759" textLength="118" lengthAdjust="spacingAndGlyphs">CFY Lodgement Due</text>
<text x="738" y="760" style="font-size:13px;font-weight:bold;fill:#217346">...</text>
<circle cx="771" cy="755.500" r="7.500" fill="none" stroke="#888"/><path d="M767 755.500h8M771 751.500v8" stroke="#777" stroke-width="1.300"/>
<path d="M800 750v2M800 755v2M800 760v2" stroke="#aaa" stroke-width="1.500"/>
<rect x="816.500" y="748.500" width="15" height="14" fill="#fff" stroke="#888"/><path d="M826 752v7l-4-3.500z" fill="#222"/>
<rect x="831.500" y="748.500" width="443" height="14" fill="#fff" stroke="#888"/>
<rect x="1275" y="749" width="21" height="13" fill="#f0f0f0"/>
<rect x="1297.500" y="748.500" width="13" height="14" fill="#fff" stroke="#888"/><path d="M1302 752v7l4-3.500z" fill="#222"/>
<!-- status -->
<rect x="1" y="769" width="1331" height="22" fill="#f3f2f1"/>
<path d="M1 769.500h1331" stroke="#d0d0d0"/>
<text x="8" y="785" textLength="32" lengthAdjust="spacingAndGlyphs" style="font-size:12px;fill:#444">Ready</text>
<path d="M59.500 775.500h12M59.500 775.500v11h5M62 778.500h7M62 781.500h3M62 784.500h3" fill="none" stroke="#555"/><circle cx="68" cy="783" r="4" fill="none" stroke="#555"/><circle cx="68" cy="783" r="1.800" fill="#555"/>
<rect x="1021" y="770" width="40" height="21" fill="#d2d2d2"/>
<path d="M1034.500 775.500h12v12h-12zM1038.500 775.500v12M1042.500 775.500v12M1034.500 779.500h12M1034.500 783.500h12" fill="none" stroke="#444"/>
<path d="M1075.500 775.500h12v12h-12zM1078 778.500h7M1078 781.500h7M1078 784.500h7" fill="none" stroke="#444"/>
<path d="M1115.500 775.500h12v11.500h-12zM1119.500 775.500v7h4.500v-7" fill="none" stroke="#444"/>
<path d="M1147 781.500h7M1160 781.500h100M1264 781.500h8M1268 777v9M1211.500 778v7" stroke="#555"/>
<rect x="1200" y="776" width="5" height="12" fill="#444"/>
<text x="1286" y="785" textLength="21" lengthAdjust="spacingAndGlyphs" style="font-size:11.500px;fill:#555">85%</text>
<!-- window edge -->
<path d="M.5 35v757M1332.500 35v757M0 791.500h1333" stroke="#217346"/>
</svg>
</body></html>
